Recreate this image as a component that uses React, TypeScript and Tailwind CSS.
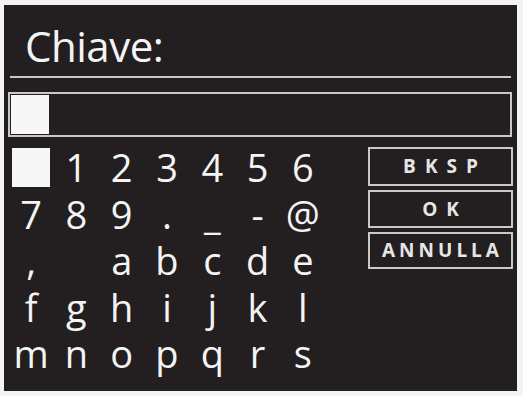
import React from 'react';

const rows: string[][] = [
  ['', '1', '2', '3', '4', '5', '6'],
  ['7', '8', '9', '.', '_', '-', '@'],
  [',', ' ', 'a', 'b', 'c', 'd', 'e'],
  ['f', 'g', 'h', 'i', 'j', 'k', 'l'],
  ['m', 'n', 'o', 'p', 'q', 'r', 's'],
];

const buttons = [
  { label: 'BKSP', track: 'tracking-[9px] pl-[9px]', h: 'h-[39px]' },
  { label: 'OK', track: 'tracking-[9px] pl-[9px]', h: 'h-[38px]' },
  { label: 'ANNULLA', track: 'tracking-[4px] pl-[4px]', h: 'h-[37px]' },
];

export default function App() {
  return (
    <div className="h-[396px] w-[523px] bg-[#f3f3f3] pl-[4px] pt-[5px]">
      <div
        className="flex h-[386px] w-[513px] flex-col bg-[#231f20] text-[#f4f4f4]"
        style={{ fontFamily: '"Open Sans", "Noto Sans", sans-serif' }}
      >
        <div className="pl-[21px] pt-[20px] text-[42px] font-medium leading-none tracking-[-0.5px]">Chiave:</div>

        <div className="ml-[6px] mt-[9px] h-[2px] w-[501px] bg-[#c9c9c9]" />

        <div className="ml-[4px] mt-[14px] flex h-[45px] w-[504px] border-2 border-[#c9c9c9] p-[1px]">
          <div className="h-full w-[38px] bg-[#f7f7f7]" />
        </div>

        <div className="mt-[7px] flex">
          <div className="ml-[4.5px] grid w-[317px] grid-cols-7 auto-rows-[46.5px]">
            {rows.flat().map((ch, i) => (
              <div key={i} className="flex items-center justify-center">
                {i === 0 ? (
                  <div className="h-[39px] w-[38px] bg-[#f7f7f7]" />
                ) : (
                  <span className="whitespace-pre text-[38px] font-medium leading-none">{ch}</span>
                )}
              </div>
            ))}
          </div>

          <div className="ml-[42.5px] mt-[3px] flex w-[145px] flex-col gap-[4px]">
            {buttons.map((b) => (
              <div
                key={b.label}
                className={`flex ${b.h} items-center justify-center border-2 border-[#c9c9c9] text-[19px] font-bold leading-none text-[#e6e6e6] ${b.track}`}
              >
                {b.label}
              </div>
            ))}
          </div>
        </div>
      </div>
    </div>
  );
}
